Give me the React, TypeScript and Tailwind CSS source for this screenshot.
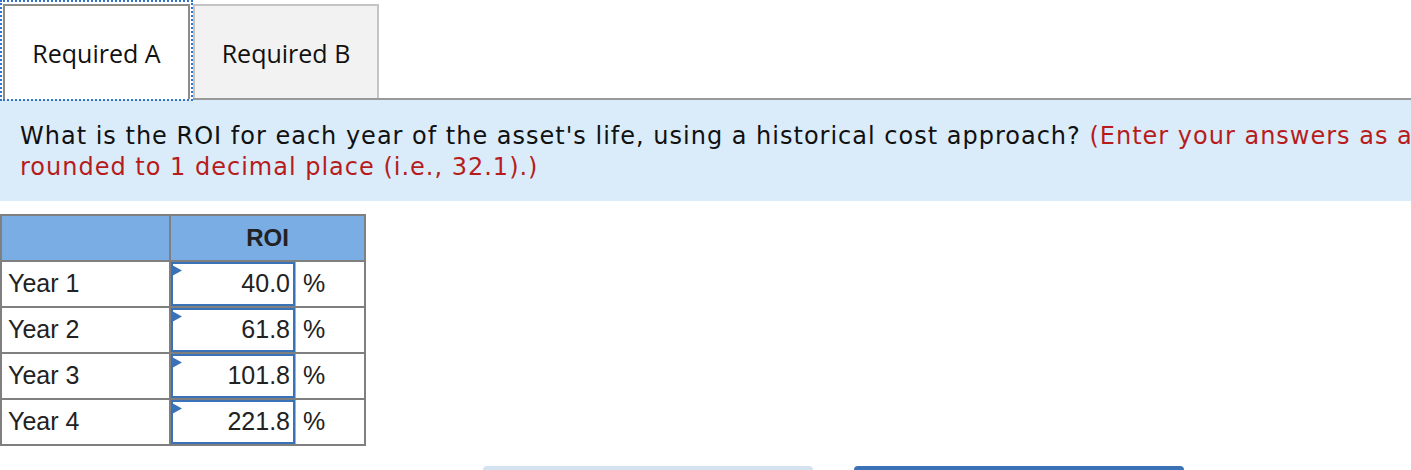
import React from 'react';

const rows = [
    { label: 'Year 1', value: '40.0' },
    { label: 'Year 2', value: '61.8' },
    { label: 'Year 3', value: '101.8' },
    { label: 'Year 4', value: '221.8' },
];

function Tabs() {
    return (
        <div className="flex h-[100px] items-stretch font-['Open_Sans',sans-serif] text-[25px] text-[#111]">
            <div className="h-[101px] w-[193px] shrink-0 border-2 border-dotted border-[#2f74c8] px-[1px] pt-[2px]">
                <div className="flex h-full items-center justify-center border-2 border-b-0 border-[#8c8c8c] bg-white pt-[2px]">
                    Required A
                </div>
            </div>
            <div className="flex flex-1 items-end border-b-2 border-[#999]">
                <div className="flex h-[94px] w-[186px] items-center justify-center border-2 border-b-0 border-[#c4c4c4] bg-[#f2f2f2] pt-[4px]">
                    Required B
                </div>
            </div>
        </div>
    );
}

function Question() {
    return (
        <div className="h-[101px] whitespace-nowrap bg-[#daecfa] px-5 pt-[21px] font-['DejaVu_Sans',sans-serif] text-[24px] leading-[31px] tracking-[1px] text-[#111]">
            What is the ROI for each year of the asset's life, using a historical cost approach?{' '}
            <span className="text-[#b71c1c]">(Enter your answers as a percentage</span>
            <br />
            <span className="text-[#b71c1c]">rounded to 1 decimal place (i.e., 32.1).)</span>
        </div>
    );
}

function RoiTable() {
    return (
        <div className="mt-[13px] w-[366px] border-2 border-[#7f7f7f] font-['Liberation_Sans',Arial,sans-serif] text-[25px] text-[#222]">
            <div className="flex h-[46px] border-b-2 border-[#7f7f7f] bg-[#79ade4]">
                <div className="w-[169px] border-r-2 border-[#7f7f7f]" />
                <div className="flex flex-1 items-center justify-center text-[24px] font-bold">ROI</div>
            </div>
            {rows.map((r, i) => (
                <div
                    key={r.label}
                    className={i < rows.length - 1 ? 'flex h-[46px] border-b-2 border-[#7f7f7f]' : 'flex h-[44px]'}
                >
                    <div className="flex w-[169px] items-center border-r-2 border-[#7f7f7f] pl-[6px]">{r.label}</div>
                    <div className="flex flex-1 items-stretch">
                        <div className="relative flex w-[124px] items-center justify-end border-2 border-[#3a72b8] pr-[3px]">
                            <svg className="absolute -left-[1px] top-[1px]" width="10" height="11" viewBox="0 0 10 11">
                                <polygon points="0,0 10,5.5 0,11" fill="#3a72b8" />
                            </svg>
                            {r.value}
                        </div>
                        <div className="flex items-center border-l border-[#b0b0b0] pl-[7px]">%</div>
                    </div>
                </div>
            ))}
        </div>
    );
}

export default function App() {
    return (
        <div className="relative h-[470px] w-[1411px] overflow-hidden bg-white">
            <Tabs />
            <Question />
            <RoiTable />
            <div className="mt-[20px] flex gap-[41px] pl-[483px]">
                <div className="h-[10px] w-[330px] rounded-t-[4px] bg-[#d5e3f1]" />
                <div className="h-[10px] w-[330px] rounded-t-[4px] bg-[#3a72b5]" />
            </div>
        </div>
    );
}
